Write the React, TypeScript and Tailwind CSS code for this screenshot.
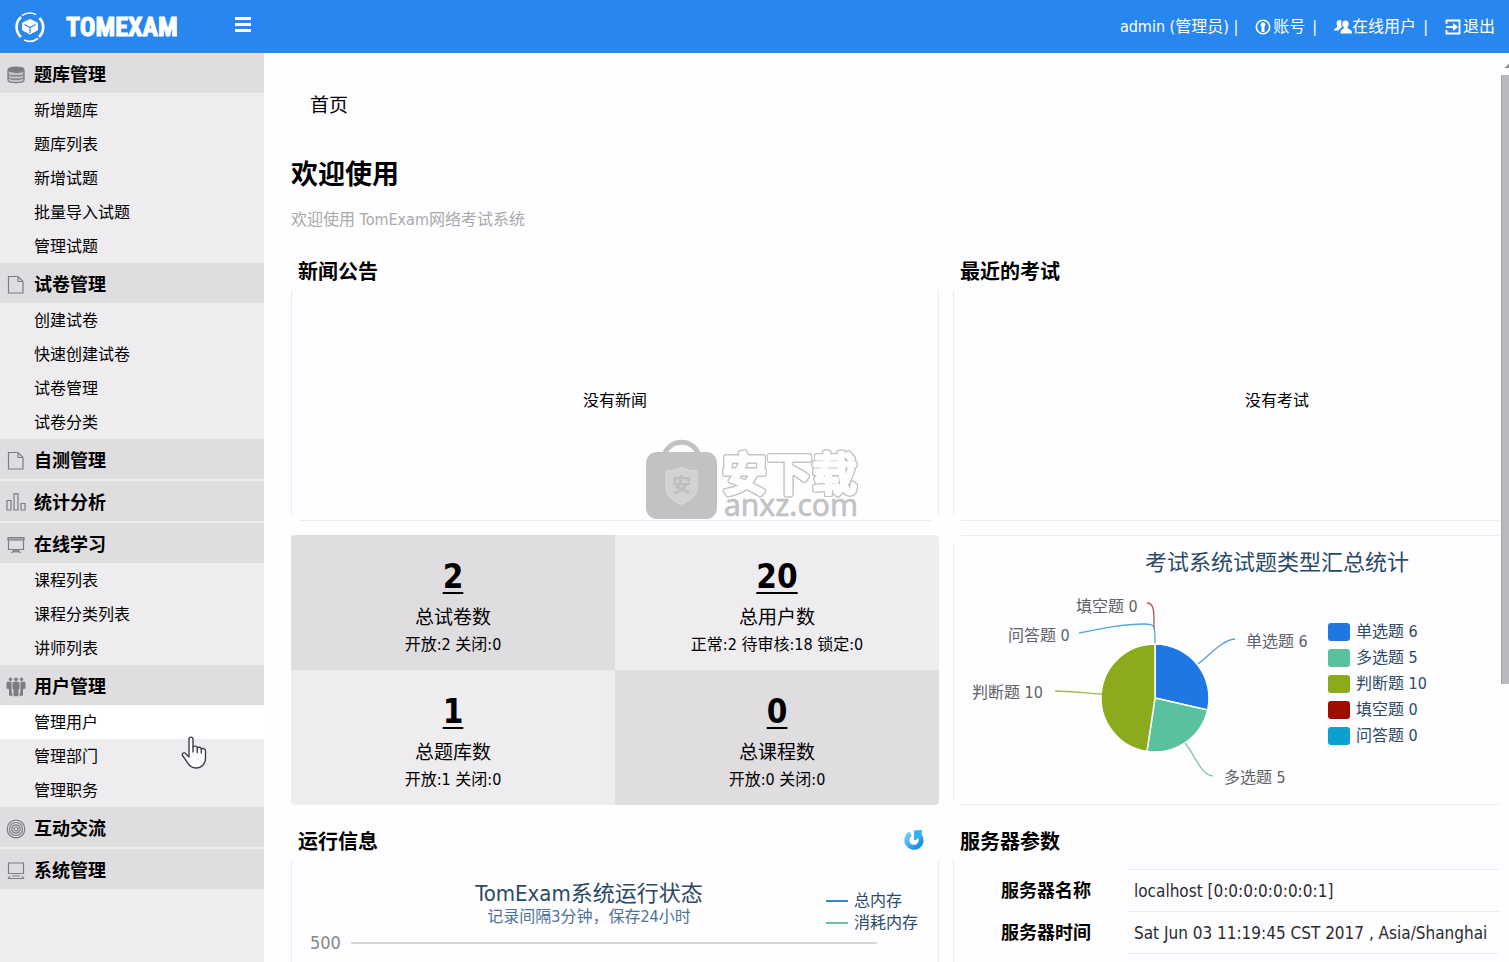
import type { ReactNode } from "react";

type MenuIcon = "database" | "file" | "bars" | "board" | "users" | "target" | "monitor";

type MenuGroup = {
  title: string;
  icon: MenuIcon;
  items: string[];
};

type Slice = {
  name: string;
  value: number;
  color: string;
};

const menu: MenuGroup[] = [
  {
    title: "题库管理",
    icon: "database",
    items: ["新增题库", "题库列表", "新增试题", "批量导入试题", "管理试题"],
  },
  {
    title: "试卷管理",
    icon: "file",
    items: ["创建试卷", "快速创建试卷", "试卷管理", "试卷分类"],
  },
  { title: "自测管理", icon: "file", items: [] },
  { title: "统计分析", icon: "bars", items: [] },
  {
    title: "在线学习",
    icon: "board",
    items: ["课程列表", "课程分类列表", "讲师列表"],
  },
  {
    title: "用户管理",
    icon: "users",
    items: ["管理用户", "管理部门", "管理职务"],
  },
  { title: "互动交流", icon: "target", items: [] },
  { title: "系统管理", icon: "monitor", items: [] },
];

const activeItem = "管理用户";

const stats = [
  { value: 2, label: "总试卷数", detail: "开放:2 关闭:0", dark: true },
  { value: 20, label: "总用户数", detail: "正常:2 待审核:18 锁定:0", dark: false },
  { value: 1, label: "总题库数", detail: "开放:1 关闭:0", dark: false },
  { value: 0, label: "总课程数", detail: "开放:0 关闭:0", dark: true },
];

const slices: Slice[] = [
  { name: "单选题", value: 6, color: "#1f77e4" },
  { name: "多选题", value: 5, color: "#59c19d" },
  { name: "判断题", value: 10, color: "#89ab1c" },
  { name: "填空题", value: 0, color: "#9d0d00" },
  { name: "问答题", value: 0, color: "#0b9fd2" },
];

const serverInfo = [
  { label: "服务器名称", value: "localhost [0:0:0:0:0:0:0:1]" },
  { label: "服务器时间", value: "Sat Jun 03 11:19:45 CST 2017 , Asia/Shanghai" },
];

const SideIcon = ({ name }: { name: MenuIcon }) => (
  <svg
    className="w-5 h-5 shrink-0"
    viewBox="0 0 20 20"
    fill="none"
    stroke="#7d7c80"
    strokeWidth={1.2}
    aria-hidden="true">
    {name === "database" && (
      <>
        <path
          fill="#c4c3c6"
          d="M2 5v10c0 1.600 3.600 2.700 8 2.700s8-1.100 8-2.700V5"
        />
        <ellipse cx="10" cy="4.700" rx="8" ry="2.600" fill="#7d7c80" />
        <path d="M2 8.400c0 1.600 3.600 2.500 8 2.500s8-.9 8-2.500M2 11.800c0 1.600 3.600 2.500 8 2.500s8-.9 8-2.500" />
      </>
    )}
    {name === "file" && <path d="M2.500 1.500h9.500l5 5v11.500h-14.500zM12 1.500v5h5" />}
    {name === "bars" && <path d="M1 7.500h4v9.500H1zM8 .8h4V17H8zM15 10.500h4V17h-4z" />}
    {name === "board" && (
      <>
        <path fill="#a9a8ab" d="M2 2.500h16v2.500H2z" />
        <path d="M2.500 5v9.500h15V5M9 14.500l-3.500 3.500M11 14.500l3.500 3.500M8 17.500l2-2 2 2" />
      </>
    )}
    {name === "users" && (
      <g fill="#7d7c80" stroke="none">
        <circle cx="4.500" cy="2.300" r="1.700" />
        <circle cx="10" cy="2.300" r="1.900" />
        <circle cx="15.500" cy="2.300" r="1.700" />
        <path d="M6.500 6.300c0-1 .6-1.500 1.500-1.500h4c.9 0 1.500.5 1.500 1.500v6l-1 .5v6.500H7.500v-6.500l-1-.5z" />
        <path d="M.5 6.300c0-1 .5-1.500 1.500-1.500h3.500v8l1 6H3v-6.500L.5 11.500zM19.500 6.300c0-1-.5-1.500-1.500-1.500h-3.500v8l-1 6H17v-6.500l2.500-.8z" />
      </g>
    )}
    {name === "target" && (
      <>
        <circle cx="10" cy="10" r="8.800" />
        <circle cx="10" cy="10" r="6.500" />
        <circle cx="10" cy="10" r="4.200" />
        <circle cx="10" cy="10" r="2" />
      </>
    )}
    {name === "monitor" && (
      <path d="M2.500 2h15v10.500h-15zM2 17.500h16M6 15h8M4 15l-2 2.500M16 15l2 2.500" />
    )}
  </svg>
);

const Logo = () => (
  <svg className="w-8 h-8" viewBox="0 0 32 32" fill="none" stroke="#fff" aria-hidden="true">
    <path strokeWidth={1.6} d="M8 4.500a14 14 0 0 1 14-1M24 27.500a14 14 0 0 1-14 1.500" />
    <path strokeWidth={2.6} d="M7 6a13.500 13.500 0 0 0 0 20M25.500 7a13.500 13.500 0 0 1-.5 19" />
    <path fill="#fff" strokeLinejoin="round" d="M16 8.500l7.500 3.500v7L16 23l-7.500-4v-7z" />
    <path stroke="#2887ee" strokeWidth={1.2} d="M10.500 13.500L16 16.500l5.500-3M16 16.500V22" />
  </svg>
);

const Header = () => (
  <header className="flex items-center justify-between h-[53px] shrink-0 bg-[#2887ee] text-white">
    <div className="flex items-center h-full pl-[14px]">
      <Logo />
      <span className="ml-5 w-[114px] whitespace-nowrap font-bold text-[26px] leading-8 font-['Impact','Roboto_Condensed','Open_Sans_Condensed','Noto_Sans_Condensed',Roboto,sans-serif] [-webkit-text-stroke:1px_white]">
        TOMEXAM
      </span>
      <button type="button" aria-label="菜单" className="ml-[55px] -mt-1 flex flex-col gap-[3px]">
        <span className="block w-4 h-[3px] bg-white" />
        <span className="block w-4 h-[3px] bg-white" />
        <span className="block w-4 h-[3px] bg-white" />
      </button>
    </div>
    <nav className="flex items-center gap-[17px] pt-px pr-[14px] text-[16px] leading-6 whitespace-nowrap">
      <span>admin (管理员) |</span>
      <span className="flex items-center">
        <a href="#account" className="flex items-center gap-[2px]">
          <svg className="w-4 h-4" viewBox="0 0 16 16" aria-hidden="true">
            <circle cx="8" cy="8" r="6.700" fill="none" stroke="#fff" strokeWidth="1.600" />
            <path fill="#fff" d="M8 3.200a2.600 2.600 0 0 1 1.500 4.600V13h-3V7.800A2.600 2.600 0 0 1 8 3.200z" />
          </svg>
          账号
        </a>
        <span className="ml-[7px]">|</span>
      </span>
      <span className="flex items-center">
        <a href="#online" className="flex items-center">
          <svg className="w-[18px] h-4" viewBox="0 0 18 16" fill="#fff" aria-hidden="true">
            <path d="M11.500 1.500c2 0 3.200 1.500 3.200 3.500 0 1.500-.6 2.700-1.500 3.500 0 1.300 4.300 1.700 4.800 4.500v1.500H6.500V13c.4-2.600 3.500-3 3.500-4.500C9 7.700 8.300 6.500 8.300 5c0-2 1.200-3.500 3.200-3.500z" />
            <path d="M5.500 1c1 0 1.700.3 2.200.9C6.800 3.600 7 6.200 8.200 8 7 9 5.300 9.600 4.800 11.500H0c.2-2.300 3.500-2.500 3.500-4C2.800 6.800 2.600 5.500 2.600 4c0-1.800 1.200-3 2.900-3z" />
          </svg>
          在线用户
        </a>
        <span className="ml-[7px]">|</span>
      </span>
      <a href="#logout" className="flex items-center gap-[2px]">
        <svg className="w-4 h-4" viewBox="0 0 16 16" fill="none" stroke="#fff" strokeWidth={1.800} aria-hidden="true">
          <path d="M1.500 5V1.500h13v13h-13V11M1 8h9" />
          <path fill="#fff" stroke="none" d="M8 4l5 4-5 4z" />
        </svg>
        退出
      </a>
    </nav>
  </header>
);

const Sidebar = () => (
  <nav className="w-[264px] shrink-0 bg-[#eeecef] text-black">
    {menu.map((group) => (
      <section key={group.title} className={group.items.length ? "" : "pb-[2px]"}>
        <h2 className="bg-[#dfdde0]">
          <button
            type="button"
            className="flex items-center w-full h-10 pt-[3px] pl-[6px] gap-2 text-[18px] font-bold text-left">
            <SideIcon name={group.icon} />
            {group.title}
          </button>
        </h2>
        <ul>
          {group.items.map((item) => (
            <li key={item}>
              <a
                href="#menu"
                className={`block pt-[2px] pl-[34px] text-[16px] leading-8 ${item === activeItem ? "bg-white" : ""}`}>
                {item}
              </a>
            </li>
          ))}
        </ul>
      </section>
    ))}
  </nav>
);

const Panel = ({ children, topLine }: { children: ReactNode; topLine?: boolean }) => (
  <div className="flex flex-col h-full">
    {topLine && <div className="mx-2 mb-[7px] border-t border-[#ebeaee]" />}
    <div className="flex-1 border-x border-[#ebeaee]">{children}</div>
    <div className="mx-2 mt-[5px] border-b border-[#ebeaee]" />
  </div>
);

const PanelTitle = ({ children }: { children: ReactNode }) => (
  <h2 className="pl-[7px] text-[20px] leading-7 font-bold">{children}</h2>
);

const PieChart = () => {
  const total = slices.reduce((sum, slice) => sum + slice.value, 0);
  const cx = 201;
  const cy = 119;
  const r = 54;
  let angle = 0;

  return (
    <svg className="w-[374px] h-[215px] shrink-0" viewBox="0 0 374 215" role="img" aria-label="试题类型">
      {slices
        .filter((slice) => slice.value > 0)
        .map((slice) => {
          const start = angle;
          angle += (slice.value / total) * Math.PI * 2;
          const large = angle - start > Math.PI ? 1 : 0;
          const x1 = cx + r * Math.sin(start);
          const y1 = cy - r * Math.cos(start);
          const x2 = cx + r * Math.sin(angle);
          const y2 = cy - r * Math.cos(angle);
          return (
            <path
              key={slice.name}
              d={`M${cx} ${cy}L${x1} ${y1}A${r} ${r} 0 ${large} 1 ${x2} ${y2}Z`}
              fill={slice.color}
              stroke="#fff"
              strokeWidth={1.5}
            />
          );
        })}
      <g fill="none" strokeWidth={1.3}>
        <path stroke="#5a9bd8" d="M244 85C256 76 268 61 281 60" />
        <path stroke="#7cc9b0" d="M231 164C243 179 246 195 259 197" />
        <path stroke="#9fba4d" d="M148 115C130 114 118 112 101 112" />
        <path stroke="#b0544c" d="M193 24C199 24 200 30 200 42V50" />
        <path stroke="#4bacd5" d="M125 54C150 49 170 45 190 45C201 45 201 46 201 64" />
      </g>
      <g fill="#606266" fontSize={16}>
        <text x="292" y="68">单选题 6</text>
        <text x="270" y="204">多选题 5</text>
        <text x="18" y="119">判断题 10</text>
        <text x="122" y="33">填空题 0</text>
        <text x="54" y="62">问答题 0</text>
      </g>
    </svg>
  );
};

const QuestionTypes = () => (
  <div className="text-[#2b4a66]">
    <h3 className="pt-1 text-[22px] leading-8 text-center">考试系统试题类型汇总统计</h3>
    <div className="flex">
      <PieChart />
      <ul className="pt-10 text-[16px] leading-[26px]">
        {slices.map((slice) => (
          <li key={slice.name} className="flex items-center gap-[6px]">
            <span
              className="w-[22px] h-[18px] rounded-[3px]"
              style={{ backgroundColor: slice.color }}
            />
            {slice.name} {slice.value}
          </li>
        ))}
      </ul>
    </div>
  </div>
);

const RunningState = () => (
  <div className="pt-5 text-[#2b4a66]">
    <div className="flex pl-[60px] pr-5">
      <div className="flex-1 text-center">
        <h3 className="text-[22px] leading-7">TomExam系统运行状态</h3>
        <p className="text-[16px] leading-[18px] text-[#4d7396]">记录间隔3分钟，保存24小时</p>
      </div>
      <ul className="pt-[10px] text-[16px] leading-[22px]">
        <li className="flex items-center gap-[6px]">
          <span className="w-[22px] h-[2px] bg-[#3f84b8]" />
          总内存
        </li>
        <li className="flex items-center gap-[6px]">
          <span className="w-[22px] h-[2px] bg-[#6fbf9f]" />
          消耗内存
        </li>
      </ul>
    </div>
    <div className="flex items-center gap-[10px] pl-[18px] pr-[61px] text-[18px] leading-[18px] text-[#86868a]">
      500
      <span className="flex-1 border-t-2 border-[#d6d6d8]" />
    </div>
    <div className="h-40" />
  </div>
);

const RefreshIcon = () => (
  <svg className="w-6 h-6" viewBox="0 0 24 24" fill="none" aria-hidden="true">
    <defs>
      <linearGradient id="refresh" x1="0" y1="0" x2="1" y2="1">
        <stop offset="0" stopColor="#6fd0f8" />
        <stop offset="1" stopColor="#0a86e0" />
      </linearGradient>
    </defs>
    <path stroke="url(#refresh)" strokeWidth={5} d="M8.500 5.800A7.200 7.200 0 1 0 17.500 7.500" />
    <path fill="#35b0f0" d="M12 2.500l8-.5-.5 8-2.500-1-3 3h-2z" />
  </svg>
);

const Watermark = () => (
  <svg
    className="absolute left-[382px] top-[384px] w-[240px] h-[92px] pointer-events-none"
    viewBox="0 0 240 92"
    aria-hidden="true">
    <path fill="none" stroke="#c2c2c2" strokeWidth={5} d="M18 19a18 18 0 0 1 35 0" />
    <rect y="15" width="71" height="67" rx="11" fill="#c2c2c2" />
    <path
      fill="#d2d2d2"
      stroke="#dcdcdc"
      d="M35.500 30c5 3 10 4 15.500 4v17c0 8-7 12.500-15.500 16.500C27 63.500 20 59 20 51V34c5.500 0 10.500-1 15.500-4z"
    />
    <text x="26" y="55" fontSize={19} fontWeight={700} fill="#bdbdbd">
      安
    </text>
    <text
      x="76"
      y="54"
      fontSize={45}
      fontWeight={500}
      fill="#fefdff"
      stroke="#fefdff"
      strokeWidth={3}
      strokeLinejoin="round"
      className="[filter:drop-shadow(1px_0_0_#c2c2c2)_drop-shadow(-1px_0_0_#c2c2c2)_drop-shadow(0_1px_0_#c2c2c2)_drop-shadow(0_-1px_0_#c2c2c2)]">
      安下载
    </text>
    <text x="78" y="79" fontSize={30} fill="#c2c2c2" stroke="#c2c2c2" strokeWidth={0.6} className="font-['Noto_Sans',sans-serif]">
      anxz.com
    </text>
  </svg>
);

const Cursor = () => (
  <svg
    className="absolute left-[181px] top-[735px] w-[26px] h-[35px] pointer-events-none"
    viewBox="0 0 26 35"
    fill="#fff"
    stroke="#3d3f4d"
    strokeWidth={1.400}
    strokeLinejoin="round"
    strokeLinecap="round"
    aria-hidden="true">
    <path d="M8 22V4.500C8 1.300 12 1.300 12 4.500V12c1-1.400 4-1.200 4.300.8 1-1 3.700-.8 4 1.200 1.500-1 4.200-.3 4.200 2v7c0 6-4 10-9.500 10-5 0-7.500-3-9.500-7L1.500 20.500C.5 18 3.500 17 5 19z" />
    <path d="M12 12v5M16.300 13v4.500M20.300 14v4" />
  </svg>
);

const Main = () => (
  <main className="relative flex-1 min-w-0 overflow-hidden pl-[27px] pt-[38px]">
    <nav className="pl-[19px] text-[19px] leading-7">首页</nav>
    <h1 className="pt-9 text-[27px] leading-10 font-bold">欢迎使用</h1>
    <p className="pt-[13px] text-[16px] leading-6 text-[#a9a9ab]">欢迎使用 TomExam网络考试系统</p>

    <div className="grid grid-cols-2 gap-x-[14px] min-w-[1310px] pt-[26px]">
      <section>
        <PanelTitle>新闻公告</PanelTitle>
        <div className="pt-1 h-[235px]">
          <Panel>
            <p className="pt-[99px] text-[16px] leading-6 text-center">没有新闻</p>
          </Panel>
        </div>
      </section>
      <section>
        <PanelTitle>最近的考试</PanelTitle>
        <div className="pt-1 h-[235px]">
          <Panel>
            <p className="pt-[99px] text-[16px] leading-6 text-center">没有考试</p>
          </Panel>
        </div>
      </section>

      <section className="grid grid-cols-2 mt-[14px] rounded-sm overflow-hidden">
        {stats.map((stat) => (
          <div
            key={stat.label}
            className={`pt-5 pb-[11px] text-center ${stat.dark ? "bg-[#dfdde0]" : "bg-[#eeecef]"}`}>
            <a
              href="#stat"
              className="block text-[33px] leading-[44px] font-bold underline decoration-2 underline-offset-4">
              {stat.value}
            </a>
            <p className="pt-1 text-[19px] leading-7">{stat.label}</p>
            <p className="text-[16px] leading-7">{stat.detail}</p>
          </div>
        ))}
      </section>
      <section className="mt-[14px]">
        <Panel topLine>
          <QuestionTypes />
        </Panel>
      </section>

      <section className="pt-[23px]">
        <div className="flex items-start justify-between pr-[13px]">
          <PanelTitle>运行信息</PanelTitle>
          <button type="button" aria-label="刷新">
            <RefreshIcon />
          </button>
        </div>
        <div className="pt-1">
          <Panel>
            <RunningState />
          </Panel>
        </div>
      </section>
      <section className="flex flex-col pt-[23px]">
        <PanelTitle>服务器参数</PanelTitle>
        <div className="pt-1 flex-1">
          <Panel>
            <table className="w-full mt-[9px]">
              <tbody>
                {serverInfo.map((row) => (
                  <tr key={row.label} className="h-[42px]">
                    <th className="w-[173px] pl-[47px] text-left text-[18px] leading-6 font-bold">
                      {row.label}
                    </th>
                    <td className="pl-[7px] border-y border-[#ebeaee] text-[17px] leading-6 text-[#2c2b30]">
                      {row.value}
                    </td>
                  </tr>
                ))}
              </tbody>
            </table>
          </Panel>
        </div>
      </section>
    </div>

    <Watermark />
  </main>
);

const App = () => {
  return (
    <div className="relative flex flex-col h-screen overflow-hidden bg-[#fefdff] text-black font-['DejaVu_Sans_Condensed','Noto_Sans_CJK_SC',sans-serif]">
      <Header />
      <div className="flex flex-1 min-h-0">
        <Sidebar />
        <Main />
        <div className="flex flex-col items-end w-[10px] shrink-0">
          <svg className="w-2 h-[22px]" viewBox="0 0 8 22" aria-hidden="true">
            <path fill="#8a898c" d="M3.500 15L8 10.500V15z" />
          </svg>
          <div className="w-2 h-[67%] bg-[#bab8bc] border-l border-[#a3a2a6]" />
        </div>
      </div>
      <Cursor />
    </div>
  );
};

export default App;
